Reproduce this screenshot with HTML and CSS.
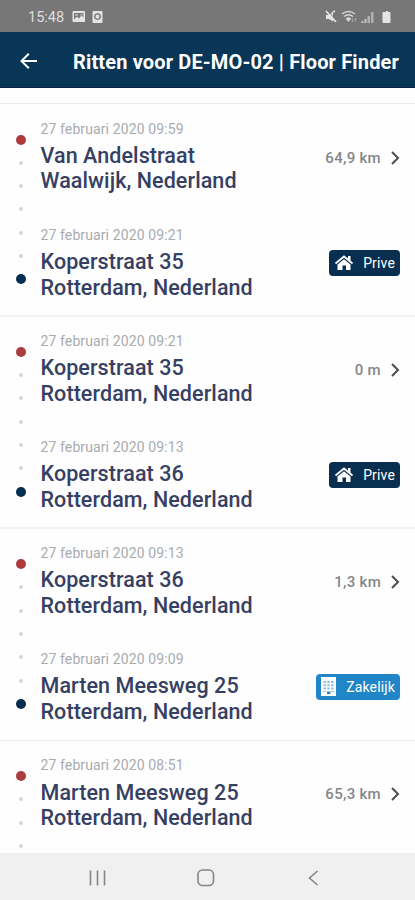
FILE: index.html
```html
<!DOCTYPE html>
<html lang="nl">
<head>
<meta charset="utf-8">
<title>Ritten</title>
<link rel="stylesheet" href="styles.css">
</head>
<body>
<div class="status">
  <span class="clock">15:48</span>
  <svg class="st-left" width="32" height="14" viewBox="0 0 32 14">
    <path fill="#e4e4e4" fill-rule="evenodd" d="M1.500 1h10.500q1 0 1 1v9q0 1-1 1H1.500q-1 0-1-1V2q0-1 1-1zM2 3v6.500l3-3 2 2 2.500-3 2 2V3z"/>
    <path fill="#a9a9a9" d="M3 4h3v2H3zM8 4h3v1.500H8z"/>
    <path fill="#e4e4e4" fill-rule="evenodd" d="M21.500 1h8q1 0 1 1v10q0 1-1 1h-8q-1 0-1-1V2q0-1 1-1zM25.500 3a3.500 3.500 0 1 0 .01 0zM25.500 4.500a2 2 0 1 1-.01 0z"/>
    <path fill="#e4e4e4" d="M25 5h1v4h-1z"/>
  </svg>
  <svg class="st-right" width="68" height="16" viewBox="0 0 68 16">
    <g fill="#e4e4e4">
      <path d="M2 6h3l4-3.500v10L5 10H2z"/>
      <path d="M64 2h-2v1h-2.500q-1 0-1 1v9q0 1 1 1h6q1 0 1-1V4q0-1-1-1H64z"/>
    </g>
    <path d="M3 1l10 11" stroke="#777" stroke-width="1"/>
    <path d="M2 2l10 11M9 3l2-1" stroke="#e4e4e4" stroke-width="1.800" fill="none"/>
    <g fill="none" stroke="#d6d6d6" stroke-width="1.300">
      <path d="M18 5q6.500-5 13 0M20 7.500q4.500-3.500 9 0M22 10q2.500-2 5 0"/>
      <path d="M28.500 9v4M27.500 11.500l1 1.500 1-1.500M31.500 13V9M30.500 10.500l1-1.500 1 1.500" stroke="#aaa" stroke-width=".8"/>
    </g>
    <path fill="#e4e4e4" d="M22.500 10h4l-2 3z"/>
    <path fill="#c6c6c6" d="M37.500 12h2v2h-2zM40.500 10h2v4h-2z"/>
    <path fill="#b0b0b0" d="M43.500 7h2.500v7h-2.500zM47 3h2.500v11H47z"/>
  </svg>
</div>
<header class="bar">
  <svg width="18" height="18" viewBox="0 0 18 18" fill="none" stroke="#fff" stroke-width="2"><path d="M17 9H2M8.800 1.700L1.500 9l7.300 7.300"/></svg>
  <h1>Ritten voor DE-MO-02 | Floor Finder</h1>
</header>
<main class="list">
  <article class="trip">
    <div class="track"><b class="end"></b><i></i><i></i><i></i><i></i><i></i><b class="start"></b></div>
    <div class="stops">
      <section class="stop"><time>27 februari 2020 09:59</time><p>Van Andelstraat</p><p>Waalwijk, Nederland</p></section>
      <section class="stop"><time>27 februari 2020 09:21</time><p>Koperstraat 35</p><p>Rotterdam, Nederland</p></section>
    </div>
    <div class="side">
      <div class="dist">64,9 km<svg width="9" height="14" viewBox="0 0 9 14"><path d="M1 1l6 6-6 6"/></svg></div>
      <div class="tag prive"><svg width="20" height="16" viewBox="0 0 20 16"><path d="M1.500 8.500L10 1.500l8.500 7" fill="none" stroke="#fff" stroke-width="1.800"/><path fill="#fff" d="M14 1h2.500v5L14 4zM10 4.200l6.500 5.300V15H12v-4.500H8.500V15h-5V9.500z"/></svg>Prive</div>
    </div>
  </article>
  <article class="trip">
    <div class="track"><b class="end"></b><i></i><i></i><i></i><i></i><i></i><b class="start"></b></div>
    <div class="stops">
      <section class="stop"><time>27 februari 2020 09:21</time><p>Koperstraat 35</p><p>Rotterdam, Nederland</p></section>
      <section class="stop"><time>27 februari 2020 09:13</time><p>Koperstraat 36</p><p>Rotterdam, Nederland</p></section>
    </div>
    <div class="side">
      <div class="dist">0 m<svg width="9" height="14" viewBox="0 0 9 14"><path d="M1 1l6 6-6 6"/></svg></div>
      <div class="tag prive"><svg width="20" height="16" viewBox="0 0 20 16"><path d="M1.500 8.500L10 1.500l8.500 7" fill="none" stroke="#fff" stroke-width="1.800"/><path fill="#fff" d="M14 1h2.500v5L14 4zM10 4.200l6.500 5.300V15H12v-4.500H8.500V15h-5V9.500z"/></svg>Prive</div>
    </div>
  </article>
  <article class="trip">
    <div class="track"><b class="end"></b><i></i><i></i><i></i><i></i><i></i><b class="start"></b></div>
    <div class="stops">
      <section class="stop"><time>27 februari 2020 09:13</time><p>Koperstraat 36</p><p>Rotterdam, Nederland</p></section>
      <section class="stop"><time>27 februari 2020 09:09</time><p>Marten Meesweg 25</p><p>Rotterdam, Nederland</p></section>
    </div>
    <div class="side">
      <div class="dist">1,3 km<svg width="9" height="14" viewBox="0 0 9 14"><path d="M1 1l6 6-6 6"/></svg></div>
      <div class="tag zakelijk"><svg width="15" height="19" viewBox="0 0 15 19"><path fill="#fff" d="M0 0h15v19H0z"/><path fill="#8fc0e2" d="M2.500 4h2.500v2H2.500zM6.300 4h2.500v2H6.300zM10 4h2.500v2H10zM2.500 7.200h2.500v2H2.500zM6.300 7.200h2.500v2H6.300zM10 7.200h2.500v2H10zM2.500 10.400h2.500v2H2.500zM6.300 10.400h2.500v2H6.300zM10 10.400h2.500v2H10zM2 14h3v1H2zM10 14h3v1h-3z"/><path fill="#2186c8" d="M6 14.500h3.500V17H6z"/></svg>Zakelijk</div>
    </div>
  </article>
  <article class="trip">
    <div class="track"><b class="end"></b><i></i><i></i><i></i><i></i><i></i><b class="start"></b></div>
    <div class="stops">
      <section class="stop"><time>27 februari 2020 08:51</time><p>Marten Meesweg 25</p><p>Rotterdam, Nederland</p></section>
    </div>
    <div class="side">
      <div class="dist">65,3 km<svg width="9" height="14" viewBox="0 0 9 14"><path d="M1 1l6 6-6 6"/></svg></div>
    </div>
  </article>
</main>
<nav class="nav">
  <svg width="18" height="18" viewBox="0 0 18 18"><path d="M2.500 1.500v15M9.500 1.500v15M16.500 1.500v15"/></svg>
  <svg width="18" height="18" viewBox="0 0 18 18"><rect x="1" y="1" width="15.500" height="15.500" rx="4.500"/></svg>
  <svg width="18" height="18" viewBox="0 0 18 18"><path d="M12.500 2L4.500 9l8 7"/></svg>
</nav>
</body>
</html>
```
FILE: styles.css
```css
* { box-sizing: border-box; }
body {
  margin: 0;
  width: 415px;
  height: 900px;
  display: flex;
  flex-direction: column;
  overflow: hidden;
  background: #fefefe;
  font-family: Roboto, "Liberation Sans", sans-serif;
}
.status {
  flex: none;
  height: 32px;
  background: #777;
  display: flex;
  align-items: center;
  padding: 2px 23px 0 28px;
}
.clock { color: #dedede; font-size: 14.500px; line-height: 16px; width: 44px; padding-top: 1px; }
.st-right { margin-left: auto; }
.bar {
  flex: none;
  height: 56px;
  background: #093556;
  border-bottom: 1px solid #062644;
  display: flex;
  align-items: center;
  padding: 2px 15px 0 20px;
}
.bar h1 {
  margin: 2px 0 0 35px;
  color: #fff;
  font-size: 20px;
  line-height: 24px;
  font-weight: 700;
  letter-spacing: 0.15px;
  white-space: nowrap;
}
.list { flex: 1; min-height: 0; overflow: hidden; padding-top: 15px; }
.trip {
  height: 212.200px;
  border-top: 1px solid #ececec;
  display: flex;
}
.trip:nth-child(2), .trip:nth-child(3) { border-top: 2px solid #f3f3f3; }
.trip:nth-child(2) > *, .trip:nth-child(3) > * { margin-top: -1px; }
.track {
  width: 41px;
  height: 180.500px;
  padding-top: 30.500px;
  flex: none;
  display: flex;
  flex-direction: column;
  align-items: center;
  justify-content: space-between;
}
.track b { width: 10px; height: 10px; border-radius: 50%; }
.track i {
  width: 10px;
  height: 10px;
  border: 3px solid transparent;
  border-radius: 50%;
  background: #d6d6da padding-box;
}
.end { background: #ad3a3c; }
.start { background: #042e50; }
.stops { flex: 1; padding-top: 15.800px; margin-left: -0.500px; }
.stop { height: 106.100px; }
.stop time {
  display: block;
  height: 23.200px;
  line-height: 18px;
  font-size: 14px;
  letter-spacing: 0.110px;
  color: #a9abb0;
  white-space: nowrap;
}
.stop p {
  margin: 0;
  font-size: 21.500px;
  line-height: 25.500px;
  font-weight: 500;
  letter-spacing: 0.080px;
  color: #364062;
  white-space: nowrap;
}
.side {
  flex: none;
  padding: 42.500px 15px 0 0;
  display: flex;
  flex-direction: column;
  align-items: flex-end;
}
.dist {
  display: flex;
  align-items: center;
  gap: 10px;
  height: 22px;
  font-size: 15px;
  font-weight: 500;
  letter-spacing: 0.300px;
  color: #85868b;
}
.dist svg { fill: none; stroke: #4b4d52; stroke-width: 2; }
.tag {
  display: flex;
  align-items: center;
  height: 26px;
  margin-top: 81px;
  border-radius: 4px;
  color: #fff;
  font-size: 14px;
  letter-spacing: 0.150px;
}
.prive { background: #082f50; padding: 0 5px; gap: 9px; }
.zakelijk { background: #2186c8; padding: 0 5px; gap: 10px; }
.nav {
  flex: none;
  height: 47px;
  background: #f0f0f0;
  display: flex;
  justify-content: space-between;
  align-items: center;
  padding: 2px 92px 0 88px;
}
.nav svg { fill: none; stroke: #858585; stroke-width: 1.600; }
```
